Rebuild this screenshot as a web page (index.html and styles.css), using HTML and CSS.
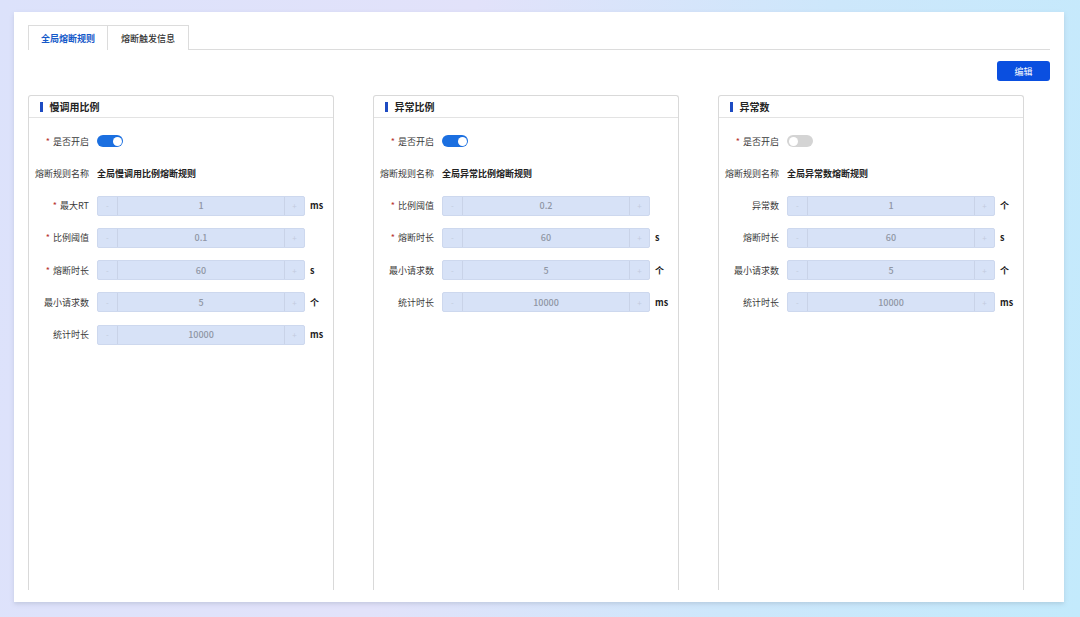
FILE: index.html
```html
<!DOCTYPE html>
<html lang="zh-CN">
<head>
<meta charset="utf-8">
<title>熔断规则</title>
<link rel="stylesheet" href="styles.css">
</head>
<body>
<div class="panel">
  <div class="tabs">
    <div class="tab active">全局熔断规则</div>
    <div class="tab">熔断触发信息</div>
  </div>
  <div class="toolbar">
    <button class="btn-primary">编辑</button>
  </div>
  <div class="cards">
    <section class="card">
      <header class="card-head"><span class="bar"></span>慢调用比例</header>
      <div class="card-body">
        <div class="row"><label class="lbl"><i>*</i>是否开启</label><span class="switch on"></span></div>
        <div class="row"><label class="lbl">熔断规则名称</label><span class="val">全局慢调用比例熔断规则</span></div>
        <div class="row"><label class="lbl"><i>*</i>最大RT</label><div class="num"><span class="step">-</span><span class="nv">1</span><span class="step">+</span></div><span class="unit">ms</span></div>
        <div class="row"><label class="lbl"><i>*</i>比例阈值</label><div class="num"><span class="step">-</span><span class="nv">0.1</span><span class="step">+</span></div><span class="unit"></span></div>
        <div class="row"><label class="lbl"><i>*</i>熔断时长</label><div class="num"><span class="step">-</span><span class="nv">60</span><span class="step">+</span></div><span class="unit">s</span></div>
        <div class="row"><label class="lbl">最小请求数</label><div class="num"><span class="step">-</span><span class="nv">5</span><span class="step">+</span></div><span class="unit">个</span></div>
        <div class="row"><label class="lbl">统计时长</label><div class="num"><span class="step">-</span><span class="nv">10000</span><span class="step">+</span></div><span class="unit">ms</span></div>
      </div>
    </section>
    <section class="card">
      <header class="card-head"><span class="bar"></span>异常比例</header>
      <div class="card-body">
        <div class="row"><label class="lbl"><i>*</i>是否开启</label><span class="switch on"></span></div>
        <div class="row"><label class="lbl">熔断规则名称</label><span class="val">全局异常比例熔断规则</span></div>
        <div class="row"><label class="lbl"><i>*</i>比例阈值</label><div class="num"><span class="step">-</span><span class="nv">0.2</span><span class="step">+</span></div><span class="unit"></span></div>
        <div class="row"><label class="lbl"><i>*</i>熔断时长</label><div class="num"><span class="step">-</span><span class="nv">60</span><span class="step">+</span></div><span class="unit">s</span></div>
        <div class="row"><label class="lbl">最小请求数</label><div class="num"><span class="step">-</span><span class="nv">5</span><span class="step">+</span></div><span class="unit">个</span></div>
        <div class="row"><label class="lbl">统计时长</label><div class="num"><span class="step">-</span><span class="nv">10000</span><span class="step">+</span></div><span class="unit">ms</span></div>
      </div>
    </section>
    <section class="card">
      <header class="card-head"><span class="bar"></span>异常数</header>
      <div class="card-body">
        <div class="row"><label class="lbl"><i>*</i>是否开启</label><span class="switch"></span></div>
        <div class="row"><label class="lbl">熔断规则名称</label><span class="val">全局异常数熔断规则</span></div>
        <div class="row"><label class="lbl">异常数</label><div class="num"><span class="step">-</span><span class="nv">1</span><span class="step">+</span></div><span class="unit">个</span></div>
        <div class="row"><label class="lbl">熔断时长</label><div class="num"><span class="step">-</span><span class="nv">60</span><span class="step">+</span></div><span class="unit">s</span></div>
        <div class="row"><label class="lbl">最小请求数</label><div class="num"><span class="step">-</span><span class="nv">5</span><span class="step">+</span></div><span class="unit">个</span></div>
        <div class="row"><label class="lbl">统计时长</label><div class="num"><span class="step">-</span><span class="nv">10000</span><span class="step">+</span></div><span class="unit">ms</span></div>
      </div>
    </section>
  </div>
</div>
</body>
</html>
```

FILE: styles.css
```css
* { box-sizing: border-box; }
html, body { margin: 0; padding: 0; }
body {
  width: 1080px;
  height: 617px;
  overflow: hidden;
  font-family: "Noto Sans CJK SC", "Noto Sans", sans-serif;
  font-size: 9px;
  color: #333;
  background: linear-gradient(100deg, #dce2fb 0%, #e2e2fa 40%, #cde7fb 70%, #c3eafc 100%);
  padding: 12px 16px 15px 14px;
}
.panel {
  height: 590px;
  background: #fff;
  box-shadow: 0 2px 4px rgba(120, 130, 150, 0.25);
  padding: 13px 14px 0 14px;
  overflow: hidden;
}
.tabs {
  display: flex;
  height: 25px;
  border-bottom: 1px solid #dcdcdc;
}
.tab {
  width: 80px;
  height: 25px;
  display: flex;
  align-items: center;
  justify-content: center;
  border: 1px solid #dcdcdc;
  border-bottom: none;
  color: #333;
  font-size: 9px;
  font-weight: 500;
  background: #fff;
}
.tab + .tab { border-left: none; width: 81px; }
.tab.active { color: #1559c9; font-weight: 700; }
.toolbar {
  display: flex;
  justify-content: flex-end;
  margin-top: 11px;
}
.btn-primary {
  width: 53px;
  height: 20px;
  border: none;
  border-radius: 3px;
  background: #0a4fe0;
  color: #fff;
  font-family: inherit;
  font-size: 9px;
  padding: 0;
}
.cards {
  display: flex;
  gap: 39.5px;
  margin-top: 14px;
}
.card {
  width: 305.5px;
  height: 495px;
  border: 1px solid #d9d9d9;
  border-bottom: none;
  border-radius: 3px 3px 0 0;
}
.card-head {
  height: 22px;
  display: flex;
  align-items: center;
  padding-left: 11px;
  border-bottom: 1px solid #e3e3e3;
  font-size: 10px;
  font-weight: 700;
  color: #222;
}
.bar {
  width: 2.5px;
  height: 10px;
  background: #1d4bc2;
  margin-right: 7px;
}
.card-body {
  padding-top: 13px;
  display: flex;
  flex-direction: column;
  gap: 12.25px;
}
.row {
  display: flex;
  align-items: center;
  height: 20px;
}
.lbl {
  width: 60px;
  text-align: right;
  color: #3a3a3a;
  margin-right: 8px;
  flex: none;
}
.lbl i {
  font-style: normal;
  color: #b83030;
  margin-right: 3px;
}
.val { font-weight: 700; color: #222; }
.switch {
  position: relative;
  width: 26px;
  height: 12px;
  border-radius: 6px;
  background: #d4d4d4;
}
.switch::after {
  content: "";
  position: absolute;
  top: 1.5px;
  left: 1.5px;
  width: 9px;
  height: 9px;
  border-radius: 50%;
  background: #fff;
}
.switch.on { background: #1b6fe0; }
.switch.on::after { left: auto; right: 1.5px; }
.num {
  width: 208px;
  height: 20px;
  display: flex;
  background: #d7e2f7;
  border: 1px solid #cdd8ee;
  border-radius: 2px;
  color: #9aa3b5;
}
.step {
  width: 20px;
  display: flex;
  align-items: center;
  justify-content: center;
  color: #c2cbdd;
  font-size: 8px;
}
.step:first-child { border-right: 1px solid #c9d3e8; }
.step:last-child { border-left: 1px solid #c9d3e8; }
.nv {
  flex: 1;
  display: flex;
  align-items: center;
  justify-content: center;
  color: #8f96a4;
  font-weight: 500;
}
.unit {
  margin-left: 5px;
  font-weight: 700;
  color: #222;
}
```
